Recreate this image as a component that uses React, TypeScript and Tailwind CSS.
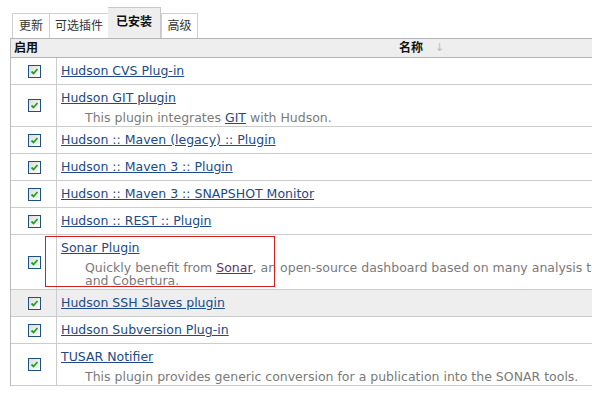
import React from 'react';

type Plugin = {
  name: string;
  desc?: React.ReactNode;
  shaded?: boolean;
};

const plugins: Plugin[] = [
  { name: 'Hudson CVS Plug-in' },
  {
    name: 'Hudson GIT plugin',
    desc: (
      <>
        This plugin integrates <a className="text-[#204a87] underline">GIT</a> with Hudson.
      </>
    ),
  },
  { name: 'Hudson :: Maven (legacy) :: Plugin' },
  { name: 'Hudson :: Maven 3 :: Plugin' },
  { name: 'Hudson :: Maven 3 :: SNAPSHOT Monitor' },
  { name: 'Hudson :: REST :: Plugin' },
  {
    name: 'Sonar Plugin',
    desc: (
      <>
        Quickly benefit from <a className="text-[#5c3566] underline">Sonar</a>, an open-source dashboard based on many analysis tools like Checkstyle, PMD, FindBugs
        <br />
        and Cobertura.
      </>
    ),
  },
  { name: 'Hudson SSH Slaves plugin', shaded: true },
  { name: 'Hudson Subversion Plug-in' },
  {
    name: 'TUSAR Notifier',
    desc: 'This plugin provides generic conversion for a publication into the SONAR tools.',
  },
];

const Checkbox = () => (
  <svg width="13" height="13" viewBox="0 0 13 13">
    <defs>
      <linearGradient id="cbg" x1="0" y1="0" x2="1" y2="1">
        <stop offset="0" stopColor="#dcdcd6" />
        <stop offset="1" stopColor="#ffffff" />
      </linearGradient>
    </defs>
    <rect x="0.5" y="0.5" width="12" height="12" fill="url(#cbg)" stroke="#1c5180" />
    <path d="M3.5 6.5 L5.5 8.5 L9.5 4" fill="none" stroke="#21a121" strokeWidth="1.8" />
  </svg>
);

const tabs = [
  { label: '更新', w: 'w-[38px]' },
  { label: '可选插件', w: 'w-[60px]' },
  { label: '已安装', w: 'w-[53px]', active: true },
  { label: '高级', w: 'w-[37px]' },
];

export default function App() {
  return (
    <div
      className="relative w-[592px] h-[396px] overflow-hidden bg-white text-[12.5px] text-[#222]"
      style={{ fontFamily: '"DejaVu Sans", "Noto Sans CJK SC", sans-serif' }}
    >
      {/* Tabs */}
      <div className="flex items-end h-[38px] pl-[12px] text-[12px]">
        {tabs.map((t) =>
          t.active ? (
            <div
              key={t.label}
              className={`${t.w} h-[31px] flex items-center justify-center bg-[#eeeeee] border-t border-r border-[#c8c8c8] font-bold text-[#111] pb-[2px]`}
            >
              {t.label}
            </div>
          ) : (
            <div
              key={t.label}
              className={`${t.w} h-[25px] flex items-center justify-center bg-white border-t border-l border-r border-[#d0d0d0] -mr-px text-[#333]`}
            >
              {t.label}
            </div>
          )
        )}
      </div>

      {/* Table */}
      <div className="ml-[10px] w-[860px] border-l border-[#bbbbbb]">
        <div className="grid grid-cols-[46px_1fr] h-[20px] bg-[#eeeeee] border-t border-b border-[#b4b4b4] font-bold text-[12px] text-[#111] items-center">
          <div className="pl-[3px]">启用</div>
          <div className="pl-[342px] flex items-center gap-[12px]">
            名称<span className="text-[#bbbbbb] font-normal text-[11px]">↓</span>
          </div>
        </div>

        {plugins.map((p) => (
          <div
            key={p.name}
            className={`grid grid-cols-[46px_1fr] border-b border-[#cccccc] ${p.shaded ? 'bg-[#eeeeee]' : 'bg-white'}`}
          >
            <div className="flex items-center justify-center border-r border-[#cccccc] pl-[1px]">
              <Checkbox />
            </div>
            <div className={`pl-[4px] pt-[5px] ${p.desc ? 'pb-[2px]' : 'pb-[5px]'}`}>
              <div className="leading-[16px]">
                <a className="text-[#204a87] underline">{p.name}</a>
              </div>
              {p.desc && (
                <div className="mt-[5px] pl-[24px] leading-[13px] text-[#7a7a7a]">{p.desc}</div>
              )}
            </div>
          </div>
        ))}
      </div>

      {/* Highlight box */}
      <div className="absolute left-[45px] top-[236px] w-[230px] h-[51px] border border-[#d02020]" />
    </div>
  );
}
